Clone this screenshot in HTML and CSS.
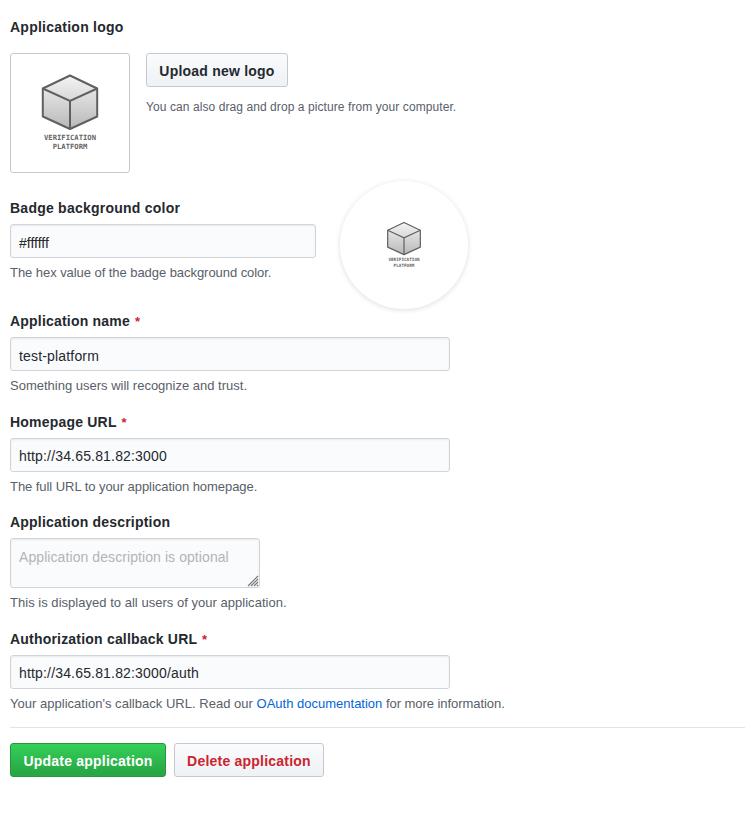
FILE: index.html
```html
<!DOCTYPE html>
<html lang="en">
<head>
<meta charset="utf-8">
<title>Application settings</title>
<link rel="stylesheet" href="styles.css">
</head>
<body>
<svg class="defs" width="0" height="0" aria-hidden="true">
  <defs>
    <linearGradient id="shade" x1="0" y1="0" x2="0" y2="1">
      <stop offset="0" stop-color="#f4f4f4"/>
      <stop offset="1" stop-color="#b8b8b8"/>
    </linearGradient>
    <symbol id="logo" viewBox="0 0 120 120">
      <path d="M60 22.500 87.200 35.500V63.500L60 76 32.800 63.500V35.500Z" fill="url(#shade)" stroke="#606060" stroke-width="2" stroke-linejoin="round"/>
      <path d="M32.800 35.500 60 48 87.200 35.500M60 48V76" fill="none" stroke="#606060" stroke-width="2"/>
      <text x="60" y="87.300" class="logo-text" textLength="52">VERIFICATION</text>
      <text x="60" y="96.300" class="logo-text" textLength="34.600">PLATFORM</text>
    </symbol>
  </defs>
</svg>
<form class="settings">
  <section class="logo-group">
    <div class="label">Application logo</div>
    <div class="logo-row">
      <div class="logo-box"><svg width="120" height="120"><use href="#logo"/></svg></div>
      <div class="upload">
        <button type="button" class="btn upload-btn">Upload new logo</button>
        <p class="hint">You can also drag and drop a picture from your computer.</p>
      </div>
    </div>
  </section>
  <section class="badge-group">
    <div class="group color-field">
      <label class="label" for="color">Badge background color</label>
      <input id="color" class="field" type="text" value="#ffffff">
      <p class="note tight">The hex value of the badge background color.</p>
    </div>
    <div class="badge"><svg width="72" height="72"><use href="#logo"/></svg></div>
  </section>
  <section class="group">
    <label class="label" for="name">Application name <span class="req">*</span></label>
    <input id="name" class="field wide" type="text" value="test-platform">
    <p class="note">Something users will recognize and trust.</p>
  </section>
  <section class="group">
    <label class="label" for="home">Homepage URL <span class="req">*</span></label>
    <input id="home" class="field wide" type="text" value="http://34.65.81.82:3000">
    <p class="note tight">The full URL to your application homepage.</p>
  </section>
  <section class="group">
    <label class="label" for="desc">Application description</label>
    <div class="area-wrap">
      <textarea id="desc" class="field area" placeholder="Application description is optional"></textarea>
      <svg class="grip" width="12" height="12" aria-hidden="true"><path d="M1 11 11 1M4 11 11 4M7 11 11 7M10 11 11 10" stroke="#777" stroke-width="1.200"/></svg>
    </div>
    <p class="note loose">This is displayed to all users of your application.</p>
  </section>
  <section class="group">
    <label class="label" for="callback">Authorization callback URL <span class="req">*</span></label>
    <input id="callback" class="field wide" type="text" value="http://34.65.81.82:3000/auth">
    <p class="note"><span class="loose">Your application's callback URL. Read our </span><a href="#">OAuth documentation</a> <span class="tight">for more information.</span></p>
  </section>
  <div class="actions">
    <button type="button" class="btn primary">Update application</button>
    <button type="button" class="btn danger">Delete application</button>
  </div>
</form>
</body>
</html>
```
FILE: styles.css
```css
* { box-sizing: border-box; }
body {
  margin: 0;
  background: #fff;
  color: #24292e;
  font: 14px/20px "Liberation Sans", Arial, sans-serif;
}
.defs { position: absolute; }
.settings { padding: 17px 7px 0 10px; }
.label { display: block; height: 20px; font-weight: 700; letter-spacing: .2px; }
.logo-group .label { letter-spacing: .25px; }
.color-field .label { letter-spacing: .24px; }
.req { color: #cb2431; font-size: 13px; margin-left: 1px; }
.logo-row { display: flex; gap: 16px; margin-top: 16px; }
.logo-box {
  width: 120px;
  height: 120px;
  border: 1px solid #c6c9cb;
  border-radius: 3px;
}
.logo-box svg { display: block; margin: -1px; }
.logo-text {
  font: 700 7.2px "DejaVu Sans Mono", monospace;
  fill: #666;
  text-anchor: middle;
}
.hint { margin: 10px 0 0; font-size: 12px; letter-spacing: .08px; color: #586069; }
.btn {
  display: block;
  height: 34px;
  padding: 2px 0 0;
  text-align: center;
  border: 1px solid #c6c9cc;
  border-radius: 3px;
  background: linear-gradient(#fafbfc, #eff3f6 90%);
  color: #24292e;
  font: 700 14px/20px "Liberation Sans", Arial, sans-serif;
  letter-spacing: .22px;
  white-space: nowrap;
}
.upload-btn { width: 142px; }
.badge-group { display: flex; gap: 24px; margin-top: 25px; height: 113px; }
.color-field { width: 306px; }
.badge {
  display: flex;
  align-items: center;
  justify-content: center;
  width: 128px;
  height: 128px;
  margin-top: -17px;
  border-radius: 50%;
  background: #fff;
  box-shadow: 0 1px 5px rgba(27, 31, 35, .15);
}
.group { margin-bottom: 16.5px; }
.field {
  display: block;
  width: 440px;
  height: 34px;
  margin: 6px 0 4px;
  padding: 3px 8px 0;
  border: 1px solid #d1d5da;
  border-radius: 3px;
  background: #fafbfc;
  box-shadow: inset 0 1px 2px rgba(27, 31, 35, .075);
  color: #24292e;
  font: 14px/20px "Liberation Sans", Arial, sans-serif;
}
.wide { letter-spacing: .17px; }
.color-field .field { width: 306px; }
.area-wrap { position: relative; width: 250px; }
.area { width: 250px; height: 50px; padding: 8px; resize: none; overflow: hidden; letter-spacing: .08px; }
.grip { position: absolute; right: 1px; bottom: 1px; }
.field::placeholder { color: #b1b5b9; opacity: 1; }
.note { margin: 0; height: 20px; padding-top: 1px; font-size: 13px; color: #586069; white-space: nowrap; }
.tight { letter-spacing: -.055px; }
.loose { letter-spacing: .025px; }
.note a { color: #0366d6; text-decoration: none; }
.actions {
  display: flex;
  gap: 8px;
  margin-top: -2px;
  padding-top: 15px;
  border-top: 1px solid #e1e4e8;
}
.primary {
  width: 156px;
  border-color: #28963f;
  background: linear-gradient(#34d058, #28a745 90%);
  color: #fff;
}
.danger { width: 150px; color: #cb2431; }
```
